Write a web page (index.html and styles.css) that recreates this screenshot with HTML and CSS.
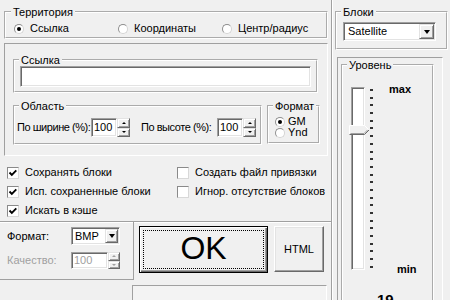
FILE: index.html
```html
<!DOCTYPE html>
<html lang="ru">
<head>
<meta charset="utf-8">
<title>Выгрузка</title>
<link rel="stylesheet" href="styles.css">
</head>
<body>
<div class="dlg">
  <div class="left">
    <fieldset class="gb terr">
      <legend>Территория</legend>
      <div class="radios3">
        <label class="opt"><span class="rb on"></span>Ссылка</label>
        <label class="opt"><span class="rb"></span>Координаты</label>
        <label class="opt"><span class="rb"></span>Центр/радиус</label>
      </div>
    </fieldset>

    <div class="panel p1">
      <fieldset class="gb link">
        <legend>Ссылка</legend>
        <div class="edit wide"></div>
      </fieldset>
      <div class="row2">
        <fieldset class="gb area">
          <legend>Область</legend>
          <div class="arearow">
            <span class="lbl w1">По ширине (%):</span>
            <span class="spin"><span class="edit num">100</span><span class="ud"><i class="up"></i><i class="dn"></i></span></span>
            <span class="lbl w2">По высоте (%):</span>
            <span class="spin"><span class="edit num">100</span><span class="ud"><i class="up"></i><i class="dn"></i></span></span>
          </div>
        </fieldset>
        <fieldset class="gb fmt">
          <legend>Формат</legend>
          <label class="opt sm first"><span class="rb on"></span>GM</label>
          <label class="opt sm"><span class="rb"></span>Ynd</label>
        </fieldset>
      </div>
    </div>

    <div class="checks">
      <div class="ccol c1">
        <label class="chk"><span class="cb"><svg width="10" height="10" viewBox="0 0 10 10"><polyline points="1.5,4.5 3.8,6.8 8.3,2.3" fill="none" stroke="#000" stroke-width="1.9"/></svg></span>Сохранять блоки</label>
        <label class="chk"><span class="cb"><svg width="10" height="10" viewBox="0 0 10 10"><polyline points="1.5,4.5 3.8,6.8 8.3,2.3" fill="none" stroke="#000" stroke-width="1.9"/></svg></span>Исп. сохраненные блоки</label>
        <label class="chk"><span class="cb"><svg width="10" height="10" viewBox="0 0 10 10"><polyline points="1.5,4.5 3.8,6.8 8.3,2.3" fill="none" stroke="#000" stroke-width="1.9"/></svg></span>Искать в кэше</label>
      </div>
      <div class="ccol">
        <label class="chk"><span class="cb"></span>Создать файл привязки</label>
        <label class="chk"><span class="cb"></span>Игнор. отсутствие блоков</label>
      </div>
    </div>

    <div class="bottom">
      <div class="opts">
        <span>Формат:</span>
        <div class="combo bmp"><span class="txt">BMP</span><span class="ddb"></span></div>
        <span class="dis">Качество:</span>
        <span class="spin q"><span class="edit num dis">100</span><span class="ud off"><i class="up"></i><i class="dn"></i></span></span>
      </div>
      <div class="btns">
        <button class="btn ok"><span class="focus">OK</span></button>
        <button class="btn html">HTML</button>
      </div>
    </div>

    <div class="status">
      <div class="spacer"></div>
      <div class="prog"></div>
    </div>
  </div>

  <div class="right">
    <fieldset class="gb blk">
      <legend>Блоки</legend>
      <div class="combo sat"><span class="txt">Satellite</span><span class="ddb"></span></div>
    </fieldset>
    <div class="panel lvlpanel">
      <fieldset class="gb lvl">
        <legend>Уровень</legend>
        <div class="track">
          <div class="chan">
            <svg class="thumb" width="21" height="10" viewBox="0 0 21 10">
              <polygon points="0.5,0.5 15.5,0.5 20,5 15.5,9.5 0.5,9.5" fill="#f0f0f0"/>
              <polyline points="0.5,9 0.5,0.5 15.5,0.5 19.5,4.5" fill="none" stroke="#fff" stroke-width="1"/>
              <polyline points="0.5,9.5 15.5,9.5 20,5" fill="none" stroke="#696969" stroke-width="1"/>
              <polyline points="1.5,8.5 15,8.5 18.5,5" fill="none" stroke="#a0a0a0" stroke-width="1"/>
            </svg>
          </div>
          <div class="ticks">
            <i></i><i></i><i></i><i></i><i></i><i></i><i></i><i></i>
            <i></i><i></i><i></i><i></i><i></i><i></i><i></i><i></i>
            <i></i><i></i><i></i><i></i><i></i><i></i><i></i><i></i>
          </div>
          <div class="tlabels">
            <span class="tmax">max</span>
            <span class="tmin">min</span>
          </div>
        </div>
        <div class="val">19</div>
      </fieldset>
    </div>
  </div>
</div>
</body>
</html>
```

FILE: styles.css
```css
* { box-sizing: border-box; }
html, body { margin: 0; padding: 0; }
body {
  width: 450px;
  height: 300px;
  overflow: hidden;
  background: #f0f0f0;
  font-family: "Liberation Sans", Arial, sans-serif;
  font-size: 11px;
  line-height: 13px;
  color: #000;
}
.dlg { display: flex; width: 450px; height: 300px; overflow: hidden; }
.left { width: 331px; flex: none; display: flex; flex-direction: column; }
.right {
  flex: 1;
  display: flex;
  flex-direction: column;
  box-shadow: inset 1px 0 0 #a0a0a0, inset 2px 0 0 #fff;
}
.left > *, .right > * { flex: none; }

/* group boxes */
.gb { margin: 0; padding: 0; min-width: 0; border: 2px groove #fff; }
.gb > legend { margin-left: 4px; padding: 0 2px; line-height: 12px; white-space: nowrap; }

.panel {
  border: 1px solid;
  border-color: #a0a0a0 #fff #fff #a0a0a0;
}

/* Территория */
.terr { margin: 6px 3px 0 4px; height: 33px; }
.terr > legend { margin-left: 5px; }
.radios3 {
  display: grid;
  grid-template-columns: 104px 104px 104px;
  margin-top: 4px;
  padding-left: 8px;
  height: 13px;
}
.opt { display: flex; align-items: center; gap: 6px; white-space: nowrap; }
.rb {
  position: relative;
  flex: none;
  width: 10px;
  height: 10px;
  border-radius: 50%;
  background: #fff;
  border: 1px solid;
  border-color: #8e8e8e #d4d4d4 #d4d4d4 #8e8e8e;
}
.rb.on::after {
  content: "";
  position: absolute;
  left: 2px;
  top: 2px;
  width: 4px;
  height: 4px;
  border-radius: 50%;
  background: #000;
}

/* panel 1 */
.p1 { margin: 4px 3px 0 4px; height: 113px; }
.link { margin: 10px 0 0 8px; width: 305px; height: 39px; }
.edit {
  display: flex;
  align-items: center;
  background: #fff;
  border: 1px solid;
  border-color: #a0a0a0 #fff #fff #a0a0a0;
  box-shadow: inset 1px 1px 0 #696969, inset -1px -1px 0 #e3e3e3;
  padding-left: 2px;
}
.edit.wide { margin-left: 5px; width: 291px; height: 21px; }

.row2 { display: flex; gap: 5px; margin: 7px 0 0 8px; }
.area { width: 249px; height: 45px; }
.fmt { width: 53px; height: 44px; }
.arearow { display: flex; align-items: center; margin-top: 6px; padding-left: 2px; height: 19px; }
.lbl { white-space: nowrap; letter-spacing: -0.45px; flex: none; }
.w1 { width: 74px; }
.w2 { width: 76px; margin-left: 11px; }
.spin { display: flex; height: 19px; flex: none; }
.spin .edit { width: 26px; }
.ud { width: 13px; display: flex; flex-direction: column; }
.ud i {
  flex: 1;
  display: flex;
  align-items: center;
  justify-content: center;
  background: #f0f0f0;
  border: 1px solid;
  border-color: #e3e3e3 #696969 #696969 #e3e3e3;
  box-shadow: inset 1px 1px 0 #fff, inset -1px -1px 0 #a0a0a0;
}
.ud i::after { content: ""; border-left: 2px solid transparent; border-right: 2px solid transparent; }
.ud i.up::after { border-bottom: 2px solid #000; }
.ud i.dn::after { border-top: 2px solid #000; }
.ud.off i.up::after { border-bottom-color: #a0a0a0; }
.ud.off i.dn::after { border-top-color: #a0a0a0; }

.fmt .opt { padding-left: 6px; height: 11px; gap: 3px; }
.fmt .opt.first { margin-top: 4px; }

/* checkboxes */
.checks { display: flex; height: 65px; padding: 7px 0 0 7px; }
.ccol { display: flex; flex-direction: column; }
.ccol.c1 { width: 170px; }
.chk { height: 19px; display: flex; align-items: center; gap: 6px; white-space: nowrap; }
.cb {
  flex: none;
  width: 12px;
  height: 12px;
  background: #fff;
  border: 1px solid;
  border-color: #8a8a8a #d8d8d8 #d8d8d8 #8a8a8a;
  display: flex;
  align-items: center;
  justify-content: center;
}
.cb svg { display: block; }

/* bottom */
.bottom { display: flex; height: 59px; border-top: 1px solid #a0a0a0; box-shadow: inset 0 1px 0 #fff; }
.opts {
  width: 134px;
  border-right: 1px solid #a0a0a0;
  border-bottom: 1px solid #a0a0a0;
  display: grid;
  grid-template-columns: 64px 49px;
  grid-template-rows: 18px 17px;
  row-gap: 7px;
  align-items: center;
  align-content: start;
  padding: 5px 0 0 7px;
}
.dis { color: #a0a0a0; }
.spin.q { height: 17px; }
.spin.q .edit { width: 37px; }
.spin.q .ud { width: 12px; }

.combo {
  display: flex;
  background: #fff;
  border: 1px solid;
  border-color: #a0a0a0 #fff #fff #a0a0a0;
  box-shadow: inset 1px 1px 0 #696969, inset -1px -1px 0 #e3e3e3;
  padding: 1px;
}
.combo .txt { flex: 1; padding-left: 2px; display: flex; align-items: center; white-space: nowrap; }
.ddb {
  display: flex;
  align-items: center;
  justify-content: center;
  background: #f0f0f0;
  border: 1px solid;
  border-color: #e3e3e3 #696969 #696969 #e3e3e3;
  box-shadow: inset 1px 1px 0 #fff, inset -1px -1px 0 #a0a0a0;
}
.ddb::after {
  content: "";
  border-left: 3.5px solid transparent;
  border-right: 3.5px solid transparent;
  border-top: 4px solid #000;
}
.combo.bmp { width: 49px; height: 18px; }
.combo.bmp .ddb { width: 13px; }

.btns { display: flex; gap: 6px; padding: 4px 0 0 5px; align-items: flex-start; }
.btn {
  margin: 0;
  padding: 0;
  font-family: inherit;
  font-size: 11px;
  color: #000;
  background: #f0f0f0;
  border: 1px solid;
  border-color: #fff #696969 #696969 #fff;
  box-shadow: inset -1px -1px 0 #a0a0a0, inset 1px 1px 0 #e3e3e3;
  display: flex;
  align-items: center;
  justify-content: center;
}
.btn.ok {
  width: 129px;
  height: 47px;
  border: 1px solid #000;
  box-shadow: inset 1px 1px 0 #fff, inset -1px -1px 0 #696969, inset -2px -2px 0 #a0a0a0;
  align-items: stretch;
}
.focus {
  flex: 1;
  margin: 3px;
  border: 1px dotted #000;
  display: flex;
  align-items: center;
  justify-content: center;
  font-size: 32px;
  line-height: 32px;
  padding-bottom: 4px;
}
.btn.html { width: 50px; height: 46px; }

.status { display: flex; height: 20px; padding-top: 5px; }
.spacer { width: 132px; }
.prog {
  width: 195px;
  height: 30px;
  border: 1px solid;
  border-color: #a0a0a0 #fff #fff #a0a0a0;
  background: #f3f3f3;
}

/* right column */
.blk { margin: 6px 2px 0 4px; height: 44px; }
.combo.sat { margin: 4px 0 0 6px; width: 93px; height: 19px; }
.combo.sat .txt { padding-left: 3px; }
.combo.sat .ddb { width: 15px; }

.lvlpanel { margin: 7px 7px 0 6px; height: 260px; }
.lvl { margin: 1px 0 0 3px; width: 93px; height: 260px; }
.lvl > legend { margin-left: 4px; }
.track { display: flex; height: 183px; margin-top: 16px; padding-left: 8px; }
.chan {
  position: relative;
  flex: none;
  width: 14px;
  height: 183px;
  background: #fff;
  border: 1px solid;
  border-color: #a0a0a0 #fff #fff #a0a0a0;
  box-shadow: inset 1px 1px 0 #696969, inset -1px -1px 0 #e3e3e3;
}
.thumb { position: absolute; left: -3px; top: 37px; display: block; }
.ticks {
  flex: none;
  margin: 2px 0 0 5px;
  height: 179px;
  display: flex;
  flex-direction: column;
  justify-content: space-between;
}
.ticks i { display: block; width: 3px; height: 2px; background: #333; }
.tlabels {
  flex: none;
  display: flex;
  flex-direction: column;
  justify-content: space-between;
  height: 193px;
  margin: -4px 0 0 16px;
  font-weight: bold;
}
.tmin { margin-left: 8px; }
.val { margin-top: 21px; padding-left: 34px; font-size: 15px; line-height: 17px; font-weight: bold; }
```
